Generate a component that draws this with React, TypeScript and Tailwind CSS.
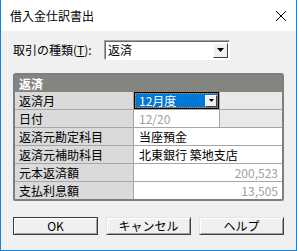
import React from "react";

const font = { fontFamily: '"Noto Sans CJK JP", "Noto Sans", sans-serif' };

function Btn({ label, def }: { label: string; def?: boolean }) {
  return (
    <div
      className={`w-[85px] h-[18px] flex items-center justify-center text-[12px] leading-none text-black bg-[#f0f0f0] ${
        def
          ? "border border-[#3c3c3c] shadow-[inset_1px_1px_0_#ffffff,inset_-1px_-1px_0_#a0a0a0]"
          : "border border-t-[#e3e3e3] border-l-[#e3e3e3] border-b-[#404040] border-r-[#404040] shadow-[inset_1px_1px_0_#ffffff,inset_-1px_-1px_0_#a0a0a0]"
      }`}
    >
      {label}
    </div>
  );
}

function Label({ children }: { children: React.ReactNode }) {
  return (
    <div className="w-[119px] shrink-0 bg-[#dadada] border-r border-[#a6a6a6] pl-[4px] flex items-center text-[12px] leading-none text-black">
      {children}
    </div>
  );
}

export default function App() {
  return (
    <div
      className="w-[297px] h-[251px] bg-[#f0f0f0] border-x border-b border-[#1883d7] flex flex-col"
      style={font}
    >
      <div className="h-[31px] bg-white flex items-center justify-between pl-[9px] pr-[8px] shrink-0">
        <span className="text-[12px] leading-none text-black">借入金仕訳書出</span>
        <svg width="12" height="12" viewBox="0 0 12 12" className="mr-[1px]">
          <path d="M1 1 L11 11 M11 1 L1 11" stroke="#000" strokeWidth="1" />
        </svg>
      </div>

      <div className="px-[12px] flex flex-col">
        <div className="mt-[9px] h-[20px] flex items-center">
          <div className="w-[91px] text-[12px] leading-none text-black">取引の種類(<span className="underline">T</span>):</div>
          <div className="w-[126px] h-[20px] bg-white border border-t-[#a0a0a0] border-l-[#a0a0a0] border-b-[#ffffff] border-r-[#ffffff] shadow-[inset_1px_1px_0_#696969] flex items-center">
            <span className="flex-1 pl-[3px] text-[12px] leading-none text-black">返済</span>
            <div className="w-[15px] h-[15px] mr-[1px] bg-[#f0f0f0] border border-t-[#ffffff] border-l-[#ffffff] border-b-[#404040] border-r-[#404040] flex items-center justify-center">
              <svg width="7" height="4" viewBox="0 0 7 4">
                <path d="M0 0 H7 L3.5 4 Z" fill="#000" />
              </svg>
            </div>
          </div>
        </div>

        <div className="mt-[13px] w-[271px] border-2 border-[#7f7f7f] rounded-t-[3px] rounded-b-[2px] bg-[#7f7f7f] flex flex-col">
          <div className="h-[17px] bg-[#858580] pl-[4px] flex items-center text-[12px] font-bold leading-none text-white">
            返済
          </div>
          <div className="flex flex-col bg-[#a6a6a6] gap-[1px] pt-[0px]">
            <div className="h-[17px] flex bg-white">
              <Label>返済月</Label>
              <div className="w-[85px] h-[17px] -mt-[0px] border border-black p-[0px] relative">
                <div className="absolute inset-0 border border-dotted border-[#ff8c00] bg-[#0078d7] flex items-center">
                  <span className="pl-[3px] flex-1 text-[12px] leading-none text-white">12月度</span>
                  <div className="w-[12px] h-[12px] mr-[0px] bg-[#f0f0f0] border border-t-[#ffffff] border-l-[#ffffff] border-b-[#404040] border-r-[#404040] flex items-center justify-center">
                    <svg width="5" height="3" viewBox="0 0 5 3">
                      <path d="M0 0 H5 L2.5 3 Z" fill="#000" />
                    </svg>
                  </div>
                </div>
              </div>
              <div className="flex-1 bg-[#e9e9e9] border-l border-[#a6a6a6]" />
            </div>
            <div className="h-[17px] flex bg-white">
              <Label>日付</Label>
              <div className="w-[85px] pl-[5px] flex items-center text-[12px] leading-none text-[#a0a0a0]">12/20</div>
              <div className="flex-1 bg-[#e9e9e9] border-l border-[#a6a6a6]" />
            </div>
            <div className="h-[17px] flex bg-white">
              <Label>返済元勘定科目</Label>
              <div className="flex-1 pl-[5px] flex items-center text-[12px] leading-none text-black">当座預金</div>
            </div>
            <div className="h-[17px] flex bg-white">
              <Label>返済元補助科目</Label>
              <div className="flex-1 pl-[5px] flex items-center text-[12px] leading-none text-black">北東銀行 築地支店</div>
            </div>
            <div className="h-[17px] flex bg-white">
              <Label>元本返済額</Label>
              <div className="flex-1 pr-[4px] flex items-center justify-end text-[12px] leading-none text-[#a0a0a0]">200,523</div>
            </div>
            <div className="h-[17px] flex bg-white">
              <Label>支払利息額</Label>
              <div className="flex-1 pr-[4px] flex items-center justify-end text-[12px] leading-none text-[#a0a0a0]">13,505</div>
            </div>
          </div>
        </div>

        <div className="mt-[16px] flex gap-[8px]">
          <Btn label="OK" def />
          <Btn label="キャンセル" />
          <Btn label="ヘルプ" />
        </div>
      </div>
    </div>
  );
}
